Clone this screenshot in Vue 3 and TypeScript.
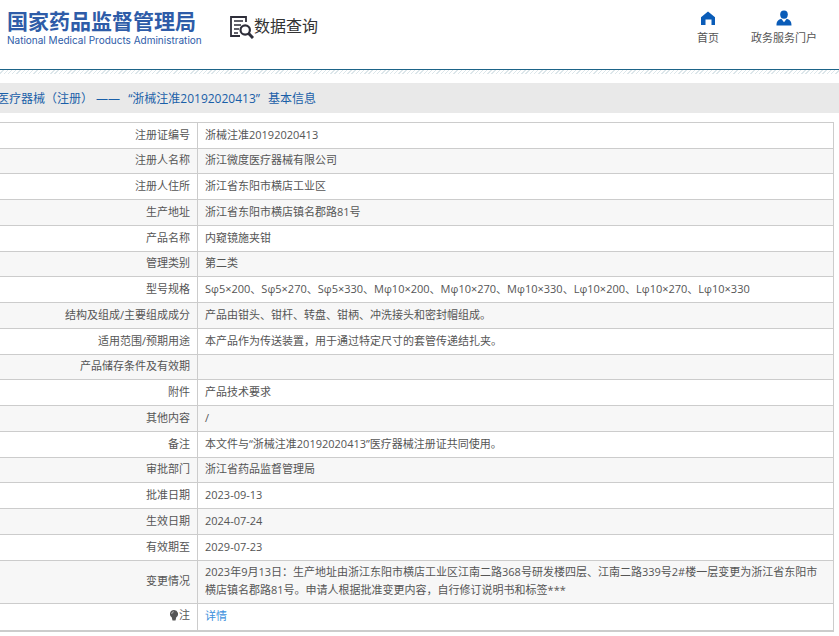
<script setup lang="ts">
interface InfoRow {
  label: string
  value: string
}

const certificateNo = '浙械注准20192020413'

const rows: InfoRow[] = [
  { label: '注册证编号', value: certificateNo },
  { label: '注册人名称', value: '浙江微度医疗器械有限公司' },
  { label: '注册人住所', value: '浙江省东阳市横店工业区' },
  { label: '生产地址', value: '浙江省东阳市横店镇名郡路81号' },
  { label: '产品名称', value: '内窥镜施夹钳' },
  { label: '管理类别', value: '第二类' },
  {
    label: '型号规格',
    value: 'Sφ5×200、Sφ5×270、Sφ5×330、Mφ10×200、Mφ10×270、Mφ10×330、Lφ10×200、Lφ10×270、Lφ10×330',
  },
  { label: '结构及组成/主要组成成分', value: '产品由钳头、钳杆、转盘、钳柄、冲洗接头和密封帽组成。' },
  { label: '适用范围/预期用途', value: '本产品作为传送装置，用于通过特定尺寸的套管传递结扎夹。' },
  { label: '产品储存条件及有效期', value: '' },
  { label: '附件', value: '产品技术要求' },
  { label: '其他内容', value: '/' },
  { label: '备注', value: `本文件与“${certificateNo}”医疗器械注册证共同使用。` },
  { label: '审批部门', value: '浙江省药品监督管理局' },
  { label: '批准日期', value: '2023-09-13' },
  { label: '生效日期', value: '2024-07-24' },
  { label: '有效期至', value: '2029-07-23' },
  {
    label: '变更情况',
    value:
      '2023年9月13日：生产地址由浙江东阳市横店工业区江南二路368号研发楼四层、江南二路339号2#楼一层变更为浙江省东阳市横店镇名郡路81号。申请人根据批准变更内容，自行修订说明书和标签***',
  },
]
</script>

<template>
  <div class="page" lang="zh-CN">
    <header class="header">
      <a class="brand" href="#">
        <span class="brand-cn">国家药品监督管理局</span>
        <span class="brand-en">National Medical Products Administration</span>
      </a>
      <div class="section">
        <svg class="section-icon" viewBox="0 0 24 24" aria-hidden="true">
          <path d="M16 7V2H1v19h9" fill="none" stroke="#2e2e3a" stroke-width="1.8" />
          <path d="M4 6h9M4 10h7M4 14h5M4 18h4" fill="none" stroke="#2e2e3a" stroke-width="1.6" />
          <circle cx="15.2" cy="15" r="4.7" fill="#fff" stroke="#2e2e3a" stroke-width="2.2" />
          <path d="M18.7 18.500l4.300 4.500" stroke="#2e2e3a" stroke-width="3" />
        </svg>
        <span>数据查询</span>
      </div>
      <nav class="nav">
        <a href="#">
          <svg class="nav-icon" viewBox="0 0 16 16" aria-hidden="true">
            <path d="M8 1.500l7 5.800V15h-3.500V9.500h-6V15H1V7.300z" fill="#0a5cb8" />
          </svg>
          <span>首页</span>
        </a>
        <a href="#">
          <svg class="nav-icon" viewBox="0 0 16 16" aria-hidden="true">
            <ellipse cx="8" cy="4.600" rx="3.800" ry="4.200" fill="#0a5cb8" />
            <path d="M.5 15.500c0-4 1-5.500 4.800-6.800L8 12.200l2.700-3.500c3.800 1.300 4.800 2.800 4.800 6.800z" fill="#0a5cb8" />
          </svg>
          <span>政务服务门户</span>
        </a>
      </nav>
    </header>
    <div class="hatch"></div>

    <main>
      <h1 class="title">
        医疗器械（注册） ——<span class="quoted">“{{ certificateNo }}”</span>基本信息
      </h1>
      <table class="info">
        <tbody>
          <tr v-for="row in rows" :key="row.label">
            <th scope="row">{{ row.label }}</th>
            <td>{{ row.value }}</td>
          </tr>
          <tr>
            <th scope="row">
              <span class="note">
                <svg class="note-icon" viewBox="0 0 8 11" aria-hidden="true">
                  <path d="M4 0a4 4 0 0 1 2.300 7.300L5.500 10.500h-3L1.700 7.300A4 4 0 0 1 4 0z" fill="#555" />
                  <path d="M1.700 4A2.300 2.300 0 0 1 3.800 1.700" fill="none" stroke="#ccc" stroke-width=".8" />
                </svg>注
              </span>
            </th>
            <td><a class="detail" href="#">详情</a></td>
          </tr>
        </tbody>
      </table>
    </main>
  </div>
</template>

<style>
body {
  margin: 0;
  background: #fff;
}
</style>

<style scoped>
.page {
  overflow: hidden;
  font-family: "Open Sans", "Noto Sans CJK SC", sans-serif;
  font-size: 11px;
  color: #555;
}

a {
  color: inherit;
  text-decoration: none;
}

.header {
  display: flex;
  box-sizing: border-box;
  height: 70px;
  padding: 8px 22px 0 7px;
  border-bottom: 1px solid #1d6488;
}

.brand {
  display: flex;
  flex-direction: column;
  width: 192px;
  color: #2e5ca8;
  white-space: nowrap;
}

.brand-cn {
  font-family: "Noto Sans CJK SC", sans-serif;
  font-size: 21px;
  font-weight: 700;
  line-height: 24px;
}

.brand-en {
  font-family: Inter, sans-serif;
  font-size: 10px;
  font-weight: 400;
  line-height: 16px;
}

.section {
  display: flex;
  align-items: flex-start;
  margin-left: 31px;
  padding-top: 7px;
  font-family: "Noto Sans CJK SC", sans-serif;
  font-size: 16px;
  line-height: 20px;
  color: #333;
}

.section-icon {
  width: 24px;
  height: 24px;
}

.nav {
  display: flex;
  gap: 32px;
  margin-left: auto;
}

.nav a {
  display: flex;
  flex-direction: column;
  align-items: center;
  gap: 4px;
  padding-top: 2px;
  line-height: 16px;
}

.nav-icon {
  width: 16px;
  height: 16px;
}

.hatch {
  height: 4px;
  background: repeating-linear-gradient(135deg, #fff 0 2px, #dce6ea 2px 3px);
}

.title {
  height: 30px;
  margin: 9px 0 9px;
  background: #e9e9e9;
  font-size: 12px;
  font-weight: 400;
  line-height: 32px;
  color: #1a5fa8;
  text-indent: -3px;
  white-space: nowrap;
}

.quoted {
  margin: 0 8px;
}

.info {
  width: calc(100% - 5px);
  border-collapse: separate;
  border-spacing: 0;
  border-top: 1px solid #ccc;
  border-right: 1px solid #ccc;
  border-bottom: 1px solid #ccc;
}

.info tr {
  height: 26px;
}

.info tr:nth-child(4n + 2) {
  height: 25px;
}

.info tr:nth-child(even) {
  background: #f7f7f7;
}

.info th,
.info td {
  padding: 2px 7px 4px;
  border-bottom: 1px solid #ccc;
  line-height: 18px;
}

.info th {
  box-sizing: border-box;
  width: 198px;
  border-right: 1px solid #ccc;
  font-weight: 400;
  text-align: right;
  white-space: nowrap;
}

.info td {
  text-align: left;
}

.note {
  display: inline-flex;
  align-items: center;
  gap: 1px;
}

.note-icon {
  width: 8px;
  height: 11px;
}

.detail {
  color: #3c8fdc;
}
</style>
